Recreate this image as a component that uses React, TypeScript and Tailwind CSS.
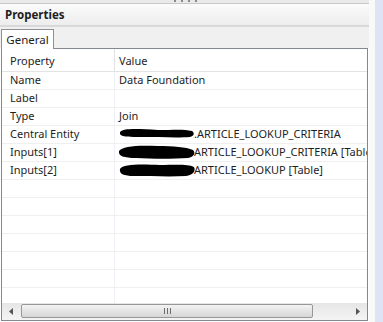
import React from "react";

const rows: { name: string; value?: string; blob?: "thin" | "thick1" | "thick2" }[] = [
  { name: "Name", value: "Data Foundation" },
  { name: "Label" },
  { name: "Type", value: "Join" },
  { name: "Central Entity", value: ".ARTICLE_LOOKUP_CRITERIA", blob: "thin" },
  { name: "Inputs[1]", value: "ARTICLE_LOOKUP_CRITERIA [Table]", blob: "thick1" },
  { name: "Inputs[2]", value: "ARTICLE_LOOKUP [Table]", blob: "thick2" },
];

// redaction marks over the first part of the value
function Blob({ kind }: { kind: "thin" | "thick1" | "thick2" }) {
  const d =
    kind === "thin"
      ? "M2 5 C6 1 20 2 40 3 C55 3 66 2 74 4 C77 6 76 9 72 10 C60 11 40 10 25 10 C12 10 3 10 2 7 Z"
      : kind === "thick1"
      ? "M1 6 C4 1 20 0 40 1 C55 1 68 2 75 5 C78 8 76 12 70 13 C55 14 35 14 18 13 C6 13 0 11 1 6 Z"
      : "M2 6 C5 1 22 1 42 2 C58 2 70 1 76 4 C78 8 75 12 68 13 C52 14 32 13 16 13 C6 13 1 11 2 6 Z";
  return (
    <svg width="78" height="15" viewBox="0 0 78 15" className="shrink-0 -mr-[2px]">
      <path d={d} fill="#000" />
    </svg>
  );
}

export default function App() {
  return (
    <div
      className="w-[383px] h-[322px] flex overflow-hidden bg-white text-[11px] text-[#1e1e1e]"
      style={{ fontFamily: '"Noto Sans", "Open Sans", sans-serif' }}
    >
      <div className="w-[369px] flex flex-col">
        {/* grip strip */}
        <div className="h-[3px] bg-[#e9e9e9] relative border-b border-[#c9c9c9] box-content">
          <div className="absolute left-[174px] top-0 flex gap-[5px]">
            <span className="w-[2px] h-[2px] bg-[#8a8a8a]" />
            <span className="w-[2px] h-[2px] bg-[#8a8a8a]" />
            <span className="w-[2px] h-[2px] bg-[#8a8a8a]" />
            <span className="w-[2px] h-[2px] bg-[#8a8a8a]" />
          </div>
        </div>
        {/* title */}
        <div className="h-[21px] bg-gradient-to-b from-[#fbfbfb] to-[#ededed] border-b-2 border-[#d9d9d9] flex items-center pl-[5px] font-bold text-[11.5px] box-content">
          Properties
        </div>
        {/* tab strip */}
        <div className="h-[21px] bg-[#f0f0f0] flex items-end">
          <div className="ml-[1px] w-[53px] h-[20px] bg-white border border-b-0 border-[#8e9096] flex items-center justify-center relative z-10 translate-y-[1px] text-[11.5px]">
            General
          </div>
        </div>
        {/* table */}
        <div className="ml-[1px] w-[367px] h-[273px] border border-[#828790] flex flex-col bg-white">
          <div className="h-[23px] flex border-b border-[#e3e3e3] shrink-0">
            <div className="w-[113px] pl-[8px] pt-[2px] border-r border-[#e3e3e3] flex items-center">Property</div>
            <div className="flex-1 pl-[4px] pt-[2px] flex items-center">Value</div>
          </div>
          <div className="flex-1 overflow-hidden">
            {rows.map((r) => (
              <div key={r.name} className="h-[18px] flex border-b border-[#efefef]">
                <div className="w-[113px] pl-[8px] border-r border-[#edf1f6] flex items-center whitespace-nowrap">
                  {r.name}
                </div>
                <div className="flex-1 pl-[3px] flex items-center whitespace-nowrap overflow-hidden">
                  {r.blob && <Blob kind={r.blob} />}
                  {r.value && <span className={r.blob ? "" : "pl-[1px]"}>{r.value}</span>}
                </div>
              </div>
            ))}
            {Array.from({ length: 7 }).map((_, i) => (
              <div key={i} className="h-[18px] flex border-b border-[#efefef]">
                <div className="w-[113px] border-r border-[#edf1f6]" />
                <div className="flex-1" />
              </div>
            ))}
          </div>
          {/* horizontal scrollbar */}
          <div className="h-[17px] shrink-0 flex bg-gradient-to-b from-[#e6e6e6] to-[#f4f4f4] pt-[1px] pb-[2px]">
            <div className="w-[19px] flex items-center justify-center">
              <svg width="5" height="7" viewBox="0 0 5 7">
                <path d="M4 0 L0 3.5 L4 7 Z" fill="#555" />
              </svg>
            </div>
            <div className="w-[292px] rounded-[2px] border border-[#979797] bg-gradient-to-b from-[#f3f3f3] to-[#d6d6d6] flex items-center justify-center">
              <div className="flex gap-[2px]">
                <span className="w-px h-[6px] bg-[#6b6b6b]" />
                <span className="w-px h-[6px] bg-[#6b6b6b]" />
                <span className="w-px h-[6px] bg-[#6b6b6b]" />
              </div>
            </div>
            <div className="flex-1" />
            <div className="w-[19px] flex items-center justify-center">
              <svg width="5" height="7" viewBox="0 0 5 7">
                <path d="M1 0 L5 3.5 L1 7 Z" fill="#555" />
              </svg>
            </div>
          </div>
        </div>
      </div>
      <div className="w-[6px] bg-[#f9f9f9]" />
      <div className="flex-1 bg-[#dfe4f4]" />
    </div>
  );
}
